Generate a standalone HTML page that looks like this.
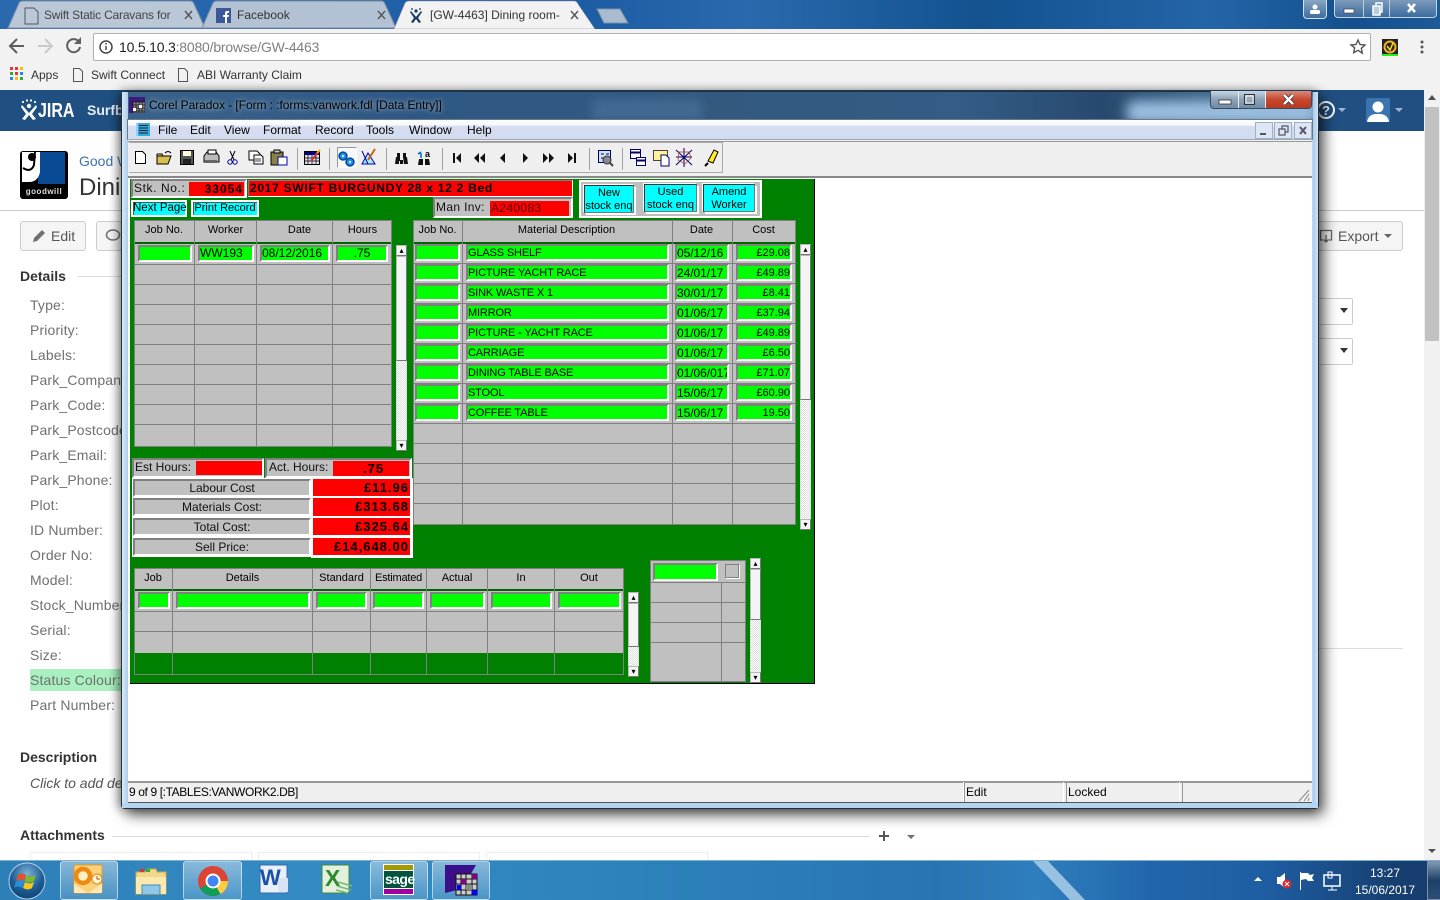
<!DOCTYPE html>
<html><head><meta charset="utf-8"><title>Corel Paradox</title>
<style>
html,body{margin:0;padding:0;width:1440px;height:900px;overflow:hidden;background:#fff;font-family:"Liberation Sans",sans-serif}
div,b,i,span,svg{position:absolute;box-sizing:border-box}
.t{white-space:nowrap;font-weight:normal;font-style:normal;color:#000}
.l{white-space:nowrap;left:30px;font-size:14px;line-height:16px;color:#707070;letter-spacing:.15px}
.h{white-space:nowrap;font-size:14px;font-weight:bold;color:#333;line-height:16px;left:20px}
.m{white-space:nowrap;top:123px;font-size:12px;line-height:14px;color:#000}
.g{white-space:nowrap;font-size:11px;line-height:14px;text-align:center;color:#000;top:223px}
.bh{top:571px}
.f{background:#0f0;border:2px solid;border-color:#808080 #fff #fff #808080;font-size:11px;line-height:13px;color:#000;white-space:nowrap;overflow:hidden;font-weight:normal;font-style:normal;padding-left:0;height:17px}
.c1{left:415px;width:45px}.c2{left:466px;width:203px;padding-top:1px;letter-spacing:-.15px}.c3{left:675px;width:54px;font-size:12px;padding-top:1px;letter-spacing:-.05px}.c4{left:736px;width:56px;text-align:right;padding-top:1px}
.r0{top:244px}.r1{top:264px}.r2{top:284px}.r3{top:304px}.r4{top:324px}.r5{top:344px}.r6{top:364px}.r7{top:384px}.r8{top:404px}
.cy{background:#0ff;border:1px solid;border-color:#333 #777 #777 #333;font-size:11px;line-height:13px;text-align:center;color:#000;white-space:nowrap}
.gr{background:#c0c0c0;border:2px solid;border-color:#808080 #fff #fff #808080;font-size:12px;line-height:14px;text-align:center;color:#111;white-space:nowrap}
.rd{background:#f00;font-weight:bold;font-size:13px;line-height:17px;letter-spacing:1px;text-align:right;color:#000;white-space:nowrap;padding-right:1px;border:1px solid #808080;border-right-color:#fff;border-bottom-color:#fff}
.sb{background:#f1f1f1;border:1px solid #ddd}
.btn{background:#f4f4f4;border:1px solid #b8b8b8;border-right-color:#777;border-bottom-color:#777;text-align:center;font-size:8px;line-height:9px;color:#000}
.tb{border:1px solid rgba(255,255,255,.55);border-radius:3px;background:linear-gradient(180deg,rgba(255,255,255,.42),rgba(255,255,255,.12));top:861px;height:39px}
</style></head><body>

<!-- Chrome -->
<div style="left:0;top:0;width:1440px;height:29px;background:linear-gradient(90deg,#2b69ae,#2464aa 18%,#1c5ca4 40%,#2a69ad 52%,#13528f 68%,#2465a8 84%,#13508d 94%,#1d5a98)"></div>
<svg style="left:0;top:0" width="640" height="30">
<path d="M8 28 L19 3 Q20 1 23 1 L190 1 Q193 1 194 4 L205 28Z" fill="#b9c7d7" stroke="#7e8fa5"/>
<path d="M202 28 L213 3 Q214 1 217 1 L381 1 Q384 1 385 4 L396 28Z" fill="#b2c2d4" stroke="#7e8fa5"/>
<path d="M394 29 L405 3 Q406 1 409 1 L574 1 Q577 1 578 4 L595 29Z" fill="#f2f2f2" stroke="#88a"  stroke-width=".5"/>
<path d="M597 9 L620 9 L628 23 L604 23Z" fill="#a9bccf" stroke="#7e8fa5"/>
<path d="M25 8h9l4 4v12H25z" fill="none" stroke="#555"/>
<rect x="216" y="8" width="15" height="15" fill="#3b5998"/><path d="M225 23v-6h-2v-2h2v-2q0-2 2-2h2v2h-1q-1 0-1 1v1h2l-.4 2H227v6z" fill="#fff"/>
<g fill="#14385f"><circle cx="416" cy="11" r="1.600"/><circle cx="412" cy="9" r=".9"/><circle cx="420" cy="9" r=".9"/><path d="M411 11l5 6 5-6 1 1-4 6 3 4-2 1-3-4-3 4-2-1 3-4-4-6z"/></g>
<g stroke="#555" stroke-width="1.400"><path d="M185 11l7 8M192 11l-7 8M378 11l7 8M385 11l-7 8M571 11l7 8M578 11l-7 8"/></g>
</svg>
<div class="t" style="left:44px;top:8px;font-size:12px;line-height:14px;color:#444;width:128px;overflow:hidden;letter-spacing:-.2px">Swift Static Caravans for Sale</div>
<div class="t" style="left:237px;top:8px;font-size:12px;line-height:14px;color:#333">Facebook</div>
<div class="t" style="left:430px;top:8px;font-size:12px;line-height:14px;color:#333;width:130px;overflow:hidden">[GW-4463] Dining room-</div>

<div style="left:1303px;top:0;width:24px;height:19px;background:linear-gradient(#8ba6c2,#3d6c9e);border:1px solid #d5e1ec;border-top:0;border-radius:0 0 4px 4px"></div>
<svg style="left:1303px;top:0" width="24" height="19"><circle cx="12" cy="7" r="2.500" fill="#fff"/><rect x="7" y="10" width="10" height="4" rx="1.500" fill="#fff"/></svg>
<div style="left:1334px;top:0;width:103px;height:18px;background:linear-gradient(#7d9bbb,#3a6c9f);border:1px solid #c6d5e4;border-top:0;border-radius:0 0 4px 4px"></div>
<div style="left:1363px;top:0;width:1px;height:17px;background:#b9cbdd"></div><div style="left:1389px;top:0;width:1px;height:17px;background:#b9cbdd"></div>
<svg style="left:1334px;top:0" width="103" height="18"><rect x="10" y="9" width="10" height="4" fill="#fff" stroke="#333" stroke-width=".6"/><rect x="39" y="6" width="7" height="9" fill="#bcd" stroke="#fff" stroke-width="1.500"/><path d="M42 5V3h6v9h-2" fill="none" stroke="#fff" stroke-width="1.500"/><path d="M74 4l7 8M81 4l-7 8" stroke="#fff" stroke-width="2.600"/></svg>

<div style="left:0;top:29px;width:1440px;height:61px;background:#f2f2f2"></div>
<div style="left:93px;top:33px;width:1278px;height:28px;background:#fff;border:1px solid #b0b0b0;border-radius:2px"></div>
<svg style="left:0;top:29px" width="116" height="32" fill="none">
<path d="M24 18H11M17 11l-7 7 7 7" stroke="#5e5e5e" stroke-width="2" transform="translate(0,-1)"/>
<path d="M38 17h13M45 10l7 7-7 7" stroke="#c9c9c9" stroke-width="2"/>
<path d="M79 13a6.500 6.500 0 1 0 1 5" stroke="#5e5e5e" stroke-width="2"/><path d="M81 8v7h-7z" fill="#5e5e5e"/>
<circle cx="106" cy="18" r="6" stroke="#444" stroke-width="1.500"/><path d="M106 17v4M106 14v1.500" stroke="#444" stroke-width="1.500"/>
</svg>
<div class="t" style="left:119px;top:39px;font-size:14px;line-height:16px;letter-spacing:-.2px;color:#222">10.5.10.3<span style="position:static;color:#808080">:8080/browse/GW-4463</span></div>
<svg style="left:1345px;top:35px" width="90" height="26" fill="none"><path d="M13 5l2 4.500 5 .5-3.700 3.300 1 4.900L13 15.300l-4.300 2.400 1-4.900L6 10l5-.5z" stroke="#555" stroke-width="1.400"/><rect x="37" y="4" width="16" height="17" fill="#222"/><circle cx="45" cy="12" r="5.500" stroke="#f5b21e" stroke-width="2"/><path d="M42 11l3 4 3-7" stroke="#f5e01e" stroke-width="1.500"/><rect x="37" y="19" width="16" height="2" fill="#2e2"/><g fill="#555"><circle cx="77" cy="7" r="1.500"/><circle cx="77" cy="12" r="1.500"/><circle cx="77" cy="17" r="1.500"/></g></svg>
<svg style="left:10px;top:67px" width="14" height="14"><g><rect x="0" y="0" width="3" height="3" fill="#e33"/><rect x="5" y="0" width="3" height="3" fill="#e33"/><rect x="10" y="0" width="3" height="3" fill="#fb0"/><rect x="0" y="5" width="3" height="3" fill="#3a3"/><rect x="5" y="5" width="3" height="3" fill="#e33"/><rect x="10" y="5" width="3" height="3" fill="#28e"/><rect x="0" y="10" width="3" height="3" fill="#28e"/><rect x="5" y="10" width="3" height="3" fill="#fb0"/><rect x="10" y="10" width="3" height="3" fill="#3a3"/></g></svg>
<div class="t" style="left:31px;top:68px;font-size:12px;line-height:14px;color:#333">Apps</div>
<svg style="left:72px;top:67px" width="120" height="15" fill="none" stroke="#555"><path d="M1.500 1.500h6l3 3v10h-9z"/><path d="M106.500 1.500h6l3 3v10h-9z"/></svg>
<div class="t" style="left:91px;top:68px;font-size:12px;line-height:14px;color:#333">Swift Connect</div>
<div class="t" style="left:197px;top:68px;font-size:12px;line-height:14px;color:#333">ABI Warranty Claim</div>

<!-- JIRA page behind -->
<div style="left:0;top:90px;width:1424px;height:41px;background:#205081"></div>
<svg style="left:21px;top:99px" width="20" height="22" fill="#fff"><circle cx="8" cy="7" r="2.200"/><circle cx="2" cy="3" r="1.100"/><circle cx="6" cy="1.500" r="1.100"/><circle cx="10" cy="1.500" r="1.100"/><circle cx="14" cy="3" r="1.100"/><path d="M1 6l7 8 7-8 1 2-5 7 4 5-3 1-4-5-4 5-3-1 4-5-5-7z"/></svg>
<div class="t" style="left:38px;top:100px;font-size:20px;line-height:22px;font-weight:bold;color:#fff;transform:scaleX(.8);transform-origin:0 0">JIRA</div>
<div class="t" style="left:87px;top:102px;font-size:14px;line-height:16px;font-weight:bold;color:#e8eef5">Surfb</div>
<svg style="left:1318px;top:97px" width="90" height="28"><circle cx="8" cy="13" r="8" fill="none" stroke="#fff" stroke-width="2"/><text x="4" y="18" font-family="Liberation Sans" font-size="13" font-weight="bold" fill="#fff">?</text><path d="M20 11h8l-4 4z M77 11h8l-4 4z" fill="#9db4ce"/><rect x="48" y="1" width="24" height="24" rx="2" fill="#3b73af"/><circle cx="60" cy="10" r="5.500" fill="#fff"/><path d="M49 25q1-7 8-8h6q7 1 8 8z" fill="#fff"/></svg>

<div style="left:20px;top:151px;width:48px;height:48px;background:#000;border-radius:3px"></div>
<div style="left:38px;top:152px;width:27px;height:32px;background:#0a4a95"></div>
<svg style="left:20px;top:151px" width="48" height="36"><path d="M2 1h18v20q-2 10-11 10H2z" fill="#fff"/><circle cx="12" cy="6" r="4" fill="#000"/><path d="M3 17q8 5 11-3l1-13" fill="none" stroke="#000" stroke-width="2"/></svg>
<div class="t" style="left:21px;top:187px;width:46px;font-size:8px;line-height:10px;font-weight:bold;color:#ddd;letter-spacing:.5px;text-align:center">goodwill</div>
<div class="t" style="left:79px;top:153px;font-size:14px;line-height:16px;color:#3b73af">Good W</div>
<div class="t" style="left:79px;top:174px;font-size:24px;line-height:28px;color:#333">Dining</div>
<div style="left:0;top:210px;width:1424px;height:1px;background:#ccc"></div>
<div style="left:20px;top:221px;width:66px;height:30px;background:#f5f5f5;border:1px solid #ccc;border-radius:3px"></div>
<svg style="left:32px;top:228px" width="16" height="16"><path d="M1 14l1-4 8-8 3 3-8 8z" fill="#707070"/></svg>
<div class="t" style="left:51px;top:228px;font-size:14px;line-height:16px;color:#555">Edit</div>
<div style="left:96px;top:221px;width:66px;height:30px;background:#f5f5f5;border:1px solid #ccc;border-radius:3px"></div>
<svg style="left:105px;top:228px" width="16" height="16"><ellipse cx="8" cy="7" rx="6.500" ry="5" fill="none" stroke="#707070" stroke-width="1.500"/></svg>
<div style="left:1310px;top:221px;width:93px;height:30px;background:#f5f5f5;border:1px solid #ccc;border-radius:3px"></div>
<svg style="left:1319px;top:229px" width="15" height="15" fill="none" stroke="#666" stroke-width="1.300"><path d="M4 11H1.500V1.500h11V11H10"/><path d="M7 6v7M4.500 10.500L7 13l2.500-2.500"/></svg>
<div class="t" style="left:1338px;top:228px;font-size:14px;line-height:16px;color:#555">Export</div>
<svg style="left:1384px;top:234px" width="9" height="5"><path d="M0 0h8l-4 4z" fill="#666"/></svg>
<div style="left:1300px;top:298px;width:53px;height:27px;background:#fff;border:1px solid #ccc;border-radius:2px"></div>
<div style="left:1300px;top:338px;width:53px;height:27px;background:#fff;border:1px solid #ccc;border-radius:2px"></div>
<svg style="left:1340px;top:308px" width="9" height="50"><path d="M0 0h8l-4 5zM0 40h8l-4 5z" fill="#333"/></svg>
<div style="left:1300px;top:648px;width:103px;height:1px;background:#ddd"></div>

<div class="h" style="top:268px">Details</div>
<div style="left:78px;top:276px;width:60px;height:1px;background:#ddd"></div>
<div class="l" style="top:297px">Type:</div><div class="l" style="top:322px">Priority:</div><div class="l" style="top:347px">Labels:</div><div class="l" style="top:372px">Park_Company:</div><div class="l" style="top:397px">Park_Code:</div><div class="l" style="top:422px">Park_Postcode:</div><div class="l" style="top:447px">Park_Email:</div><div class="l" style="top:472px">Park_Phone:</div><div class="l" style="top:497px">Plot:</div><div class="l" style="top:522px">ID Number:</div><div class="l" style="top:547px">Order No:</div><div class="l" style="top:572px">Model:</div><div class="l" style="top:597px">Stock_Number:</div><div class="l" style="top:622px">Serial:</div><div class="l" style="top:647px">Size:</div>
<div style="left:30px;top:669px;width:95px;height:22px;background:#a8f0c0"></div>
<div class="l" style="top:672px">Status Colour:</div><div class="l" style="top:697px">Part Number:</div>
<div class="h" style="top:749px">Description</div>
<div class="t" style="left:30px;top:775px;font-size:14px;line-height:16px;font-style:italic;color:#555">Click to add description</div>
<div class="h" style="top:827px">Attachments</div>
<div style="left:112px;top:836px;width:758px;height:1px;background:#ddd"></div>
<svg style="left:878px;top:830px" width="40" height="12"><path d="M6 1v10M1 6h10" stroke="#555" stroke-width="2"/><path d="M29 5h8l-4 4z" fill="#707070"/></svg>
<div style="left:30px;top:852px;width:222px;height:10px;border:1px solid #eee"></div>
<div style="left:258px;top:852px;width:222px;height:10px;border:1px solid #eee"></div>
<div style="left:486px;top:852px;width:222px;height:10px;border:1px solid #eee"></div>

<div style="left:1424px;top:90px;width:16px;height:770px;background:#f1f1f1"></div>
<div style="left:1425px;top:107px;width:14px;height:234px;background:#c1c1c1"></div>
<svg style="left:1424px;top:90px" width="16" height="770"><path d="M4 10l4-5 4 5zM4 759h8l-4 4z" fill="#505050"/></svg>

<!-- Window -->
<div style="left:121px;top:91px;width:1198px;height:718px;border-radius:6px 6px 4px 4px;background:#b9d8f2;border:1px solid #2a2f35;box-shadow:5px 6px 14px rgba(0,0,0,.65),-3px 0 10px rgba(0,0,0,.4)"></div>
<div style="left:122px;top:92px;width:1196px;height:27px;border-radius:5px 5px 0 0;overflow:hidden;background:linear-gradient(90deg,#3a638c,#2e5884 25%,#33597f 50%,#335d85 70%,#28496f 82%,#3d6485 90%,#4a7399)">
<div style="left:1005px;top:9px;width:190px;height:22px;background:#9cc0e2;filter:blur(6px);border-radius:6px"></div>
<div style="left:470px;top:7px;width:110px;height:22px;background:#4a7299;filter:blur(5px);opacity:.7"></div>
</div>
<div style="left:122px;top:92px;width:6px;height:716px;background:linear-gradient(90deg,#dce9f5,#a9cdec)"></div>
<div style="left:1313px;top:92px;width:5px;height:716px;background:linear-gradient(90deg,#a9cdec,#cfe2f4)"></div>
<div style="left:122px;top:803px;width:1196px;height:5px;background:#b5d6f2"></div>
<svg style="left:129px;top:97px" width="16" height="16"><rect width="16" height="16" fill="#3b1a78"/><rect x="4" y="5" width="12" height="11" fill="#888"/><path d="M4 5h12v11H4zM7 5v11M10 5v11M13 5v11M4 8h12M4 11h12M4 14h12" fill="none" stroke="#111" stroke-width=".7"/><rect x="10" y="8" width="3" height="3" fill="#fff"/><rect x="4" y="11" width="3" height="3" fill="#fff"/></svg>
<div class="t" style="left:149px;top:98px;font-size:12px;line-height:14px;color:#000;letter-spacing:-.06px;text-shadow:0 0 5px rgba(255,255,255,.55),0 0 9px rgba(255,255,255,.35)">Corel Paradox - [Form : :forms:vanwork.fdl [Data Entry]]</div>
<div style="left:1210px;top:91px;width:102px;height:18px;border:1px solid #3d4a58;border-top:0;border-radius:0 0 4px 4px;overflow:hidden;background:linear-gradient(#c9d6e2,#8ba2b8 50%,#6f8ba6)">
<div style="left:54px;top:0;width:47px;height:18px;background:linear-gradient(#d98a7a,#c8452e 50%,#b33a22);border-left:1px solid #eee"></div>
<div style="left:27px;top:0;width:1px;height:18px;background:#eee"></div>
</div>
<svg style="left:1210px;top:91px" width="102" height="18"><rect x="9" y="9" width="12" height="4" fill="#fff" stroke="#333" stroke-width=".8"/><rect x="34.500" y="3.500" width="10" height="10" fill="none" stroke="#333" stroke-width="1"/><rect x="36" y="5" width="7" height="7" fill="none" stroke="#fff"/><rect x="37.500" y="7" width="4" height="3" fill="#aaa"/><path d="M74 4l9 9M83 4l-9 9" stroke="#333" stroke-width="4"/><path d="M74 4l9 9M83 4l-9 9" stroke="#fff" stroke-width="2.400"/></svg>

<!-- MDI -->
<div style="left:127px;top:119px;width:1186px;height:21px;background:linear-gradient(#fff,#f7f8fc 25%,#d6ddf0 35%,#d3dbef);border:1px solid #6a7a8a;border-bottom:1px solid #a0a8b0"></div>
<svg style="left:136px;top:123px" width="14" height="13"><rect width="14" height="13" fill="#3ad"/><path d="M3 2.500h9M3 5h9M3 7.500h9M3 10h9" stroke="#222" stroke-width=".9"/><rect x="0" y="0" width="2" height="13" fill="#9cf"/></svg>
<div class="m" style="left:158px">File</div><div class="m" style="left:190px">Edit</div><div class="m" style="left:224px">View</div><div class="m" style="left:263px">Format</div><div class="m" style="left:315px">Record</div><div class="m" style="left:366px">Tools</div><div class="m" style="left:409px">Window</div><div class="m" style="left:467px">Help</div>
<svg style="left:1255px;top:122px" width="57" height="17"><g fill="#dde6f4" stroke="#9fb0c4"><rect x=".5" y=".5" width="17" height="16"/><rect x="19.500" y=".5" width="17" height="16"/><rect x="39.500" y=".5" width="17" height="16"/></g><rect x="5" y="11" width="6" height="2" fill="#556"/><path d="M24 7h6v6h-6zM27 7V4h6v6h-3" fill="none" stroke="#556" stroke-width="1.200"/><path d="M45 5l6 7M51 5l-6 7" stroke="#556" stroke-width="2"/></svg>

<div style="left:128px;top:140px;width:1184px;height:38px;background:#efefef;border-bottom:2px solid #888"></div>
<div style="left:129px;top:142px;width:594px;height:31px;border:1px solid #a8a8a8;border-left:0"></div>
<div style="left:128px;top:141px;width:1184px;height:1px;background:#999"></div>
<div style="left:337px;top:147px;width:20px;height:21px;background:#f8f8f8;border:1px solid;border-color:#999 #fff #fff #999"></div>
<svg style="left:130px;top:145px" width="590" height="26" shape-rendering="geometricPrecision">
<g stroke="#a0a0a0"><path d="M167.500 3v22M199.500 3v22M256.500 3v22M312.500 3v22M459.500 3v22M492.500 3v22"/></g>
<path d="M5.500 6.500h7l3 3v9h-10z" fill="#fff" stroke="#000"/>
<path d="M27 11h14l-3 8H27z" fill="#d8c04a" stroke="#000"/><path d="M27 9v10M27 9h5l1 2" fill="#fc0" stroke="#000"/><path d="M35 8q3-3 6 0" fill="none" stroke="#000"/>
<rect x="50.500" y="5.500" width="13" height="14" fill="#555" stroke="#000"/><rect x="53" y="6" width="8" height="5" fill="#ffd"/><rect x="53" y="14" width="8" height="5" fill="#222"/>
<path d="M74 11l3-4h9l3 4v6H74z" fill="#bbb" stroke="#000"/><rect x="75" y="15" width="12" height="3" fill="#666"/><rect x="78" y="5" width="8" height="4" fill="#fff" stroke="#000"/>
<g fill="none" stroke="#00a"><circle cx="100" cy="17" r="2.200"/><circle cx="105" cy="17" r="2.200"/></g><path d="M101 15L105 6M104 15L100 6" stroke="#000"/>
<path d="M119 6h8l3 3v6h-11z" fill="#fff" stroke="#000"/><path d="M124 10h7l2 2v7h-9z" fill="#fff" stroke="#000"/><path d="M125 14h6M125 16h6" stroke="#000" stroke-width=".8"/>
<rect x="141" y="7" width="12" height="13" fill="#8a8344" stroke="#000"/><rect x="144" y="5" width="6" height="3" fill="#ccc" stroke="#000"/><rect x="148" y="12" width="9" height="8" fill="#fff" stroke="#00a"/>
<rect x="174.500" y="6.500" width="15" height="13" fill="#dde" stroke="#000"/><rect x="175" y="7" width="14" height="3" fill="#008"/><path d="M178 10v9M182 10v9M186 10v9M175 13h14M175 16h14" stroke="#000" stroke-width=".7"/><path d="M181 16l8-10" stroke="#d33" stroke-width="2"/><path d="M187 8l3-3" stroke="#fa0" stroke-width="2"/>
<g fill="#1090e0" stroke="#003a9a" stroke-width="1.300"><circle cx="213" cy="11" r="4"/><circle cx="220" cy="17" r="4"/></g><circle cx="213" cy="11" r="1.300" fill="#cde"/><circle cx="220" cy="17" r="1.300" fill="#cde"/>
<path d="M232 19l6-11 7 11z" fill="#aef" stroke="#00a"/><path d="M238 15l7-11" stroke="#c60" stroke-width="2"/><path d="M232 6l6 13" stroke="#00a"/>
<g fill="#111"><path d="M266 12h4v3h3v-3h0v7h-3v-3h-1v3h-4zM273 12h4l1 7h-4z"/><path d="M267 8h3v4h-3zM273 8h3v4h-3z"/></g>
<g fill="#111"><path d="M289 14h4v6h-5zM295 14h4l1 6h-5z"/></g><path d="M291 8v5M288 9l3-2" stroke="#06c" stroke-width="1.500" fill="none"/><text x="295" y="12" font-family="Liberation Sans" font-size="9" font-weight="bold" fill="#000">a</text>
<g fill="#111">
<rect x="323" y="8" width="2" height="10"/><path d="M331 8v10l-5-5z"/>
<path d="M349 8v10l-5-5zM355 8v10l-5-5z"/>
<path d="M375 8v10l-5-5z"/>
<path d="M393 8v10l5-5z"/>
<path d="M413 8v10l5-5zM419 8v10l5-5z"/>
<path d="M438 8v10l5-5z"/><rect x="444" y="8" width="2" height="10"/></g>
<rect x="468.500" y="5.500" width="12" height="12" fill="#cfe4f4" stroke="#006"/><path d="M471 9h3M476 9h3M471 13h3" stroke="#006"/><circle cx="477" cy="15" r="4" fill="#889" stroke="#333"/><path d="M480 18l3 3" stroke="#444" stroke-width="2"/>
<g fill="#fff" stroke="#006"><rect x="500.500" y="4.500" width="10" height="9"/><rect x="506.500" y="12.500" width="9" height="8"/></g><path d="M500.500 7.500h10M506.500 15.500h9" stroke="#006" stroke-width="2"/>
<rect x="523.500" y="5.500" width="14" height="10" fill="#fff29a" stroke="#444"/><path d="M531 10h5l3 3v8h-8z" fill="#fff" stroke="#006"/>
<path d="M546 5l16 15M562 5l-16 15M554 3v19M546 12h16" stroke="#006" fill="none"/><path d="M549 7l10 0 2 6-6 6-7-4z" fill="none" stroke="#a33" stroke-width=".7"/>
<path d="M578 16l6-11 4 2-5 11z" fill="#fe2" stroke="#000"/><path d="M575 21l3-3" stroke="#000" stroke-width="2"/>
</svg>

<div style="left:128px;top:178px;width:1184px;height:603px;background:#fff"></div>

<!-- Form -->
<svg style="left:0;top:0" width="1440" height="900" shape-rendering="crispEdges">
<rect x="130" y="179" width="685" height="505" fill="#008000"/>
<path d="M814.500 179v504.500H130" fill="none" stroke="#000"/>
<!-- grid1 -->
<rect x="134" y="220" width="258" height="227" fill="#c0c0c0"/>
<rect x="134" y="242" width="258" height="2" fill="#006400"/>
<g fill="none" stroke="#808080"><rect x="134.500" y="220.500" width="257" height="226"/><path d="M194.500 220v226M256.500 220v226M332.500 220v226M134 264.500h258M134 284.500h258M134 304.500h258M134 324.500h258M134 344.500h258M134 364.500h258M134 384.500h258M134 404.500h258M134 424.500h258"/></g>
<!-- grid2 -->
<rect x="413" y="220" width="383" height="305" fill="#c0c0c0"/>
<rect x="413" y="242" width="383" height="2" fill="#006400"/>
<g fill="none" stroke="#808080"><rect x="413.500" y="220.500" width="382" height="304"/><path d="M462.500 220v304M672.500 220v304M732.500 220v304M413 263.500h383M413 283.500h383M413 303.500h383M413 323.500h383M413 343.500h383M413 363.500h383M413 383.500h383M413 403.500h383M413 423.500h383M413 443.500h383M413 463.500h383M413 483.500h383M413 503.500h383"/></g>
<!-- bottom -->
<rect x="134" y="568" width="490" height="85" fill="#c0c0c0"/>
<rect x="134" y="589" width="490" height="2" fill="#006400"/>
<g fill="none" stroke="#808080"><rect x="134.500" y="568.500" width="489" height="106"/><path d="M172.500 568v106M312.500 568v106M370.500 568v106M426.500 568v106M487.500 568v106M554.500 568v106M134 611.500h490M134 631.500h490"/></g>
<rect x="650" y="560" width="96" height="122" fill="#c0c0c0"/>
<g fill="none" stroke="#808080"><rect x="650.500" y="560.500" width="95" height="121"/><path d="M721.500 582v100M650 582.500h96M650 602.500h96M650 622.500h96M650 642.500h96"/></g>
<!-- white backing -->
<rect x="132" y="478" width="281" height="2" fill="#fff"/>
<rect x="311" y="479" width="102" height="79" fill="#fff"/>
<rect x="132" y="479" width="180" height="78" fill="#fff"/>
<rect x="579" y="180" width="183" height="38" fill="#fff"/>
<path d="M581.500 182.500h178v33h-178z" fill="#c0c0c0" stroke="#999" stroke-dasharray="1 1"/>
</svg>

<!-- top fields -->
<div class="gr" style="left:131px;top:179px;width:116px;height:19px;text-align:left;padding-left:1px;font-size:12px;line-height:15px;letter-spacing:.6px;border-color:#808080 #fff #fff #808080">Stk. No.:</div>
<div class="rd" style="left:189px;top:182px;width:55px;height:14px;font-size:12px;line-height:15px;border:0;padding-right:1px">33054</div>
<div style="left:248px;top:180px;width:325px;height:17px;background:#f00;border:1px solid #808080;border-color:#808080 #fff #fff #808080;font-weight:bold;font-size:12px;line-height:15px;letter-spacing:.72px;padding-left:1px;white-space:nowrap;color:#000">2017 SWIFT BURGUNDY 28 x 12 2 Bed</div>
<div class="cy" style="left:131px;top:200px;width:56px;height:17px;border:2px solid #fff;line-height:13px;box-shadow:inset 1px 1px #555;font-size:11.500px">Next Page</div>
<div class="cy" style="left:191px;top:200px;width:68px;height:17px;border:2px solid #fff;line-height:13px;box-shadow:inset 1px 1px #555">Print Record</div>
<div class="gr" style="left:433px;top:197px;width:140px;height:21px;text-align:left;padding-left:1px;line-height:17px;letter-spacing:.35px">Man Inv:</div>
<div style="left:490px;top:201px;width:79px;height:15px;background:#f00;font-size:12px;line-height:15px;letter-spacing:.35px;color:#500;padding-left:1px;white-space:nowrap">A240083</div>
<div class="cy" style="left:584px;top:185px;width:50px;height:28px;padding-top:1px;box-shadow:2px 2px #fff,-1px -1px #fff">New<br>stock enq</div>
<div class="cy" style="left:644px;top:184px;width:53px;height:28px;padding-top:1px;box-shadow:2px 2px #fff,-1px -1px #fff">Used<br>stock enq</div>
<div class="cy" style="left:703px;top:184px;width:52px;height:28px;padding-top:1px;box-shadow:2px 2px #fff,-1px -1px #fff">Amend<br>Worker</div>

<!-- grid headers -->
<div class="g" style="left:134px;width:60px">Job No.</div><div class="g" style="left:195px;width:61px">Worker</div><div class="g" style="left:262px;width:75px">Date</div><div class="g" style="left:333px;width:59px">Hours</div>
<div class="g" style="left:413px;width:49px">Job No.</div><div class="g" style="left:463px;width:207px">Material Description</div><div class="g" style="left:672px;width:59px">Date</div><div class="g" style="left:732px;width:63px">Cost</div>
<b class="f" style="left:138px;top:245px;width:54px"></b>
<b class="f" style="left:198px;top:245px;width:56px;font-size:12px">WW193</b>
<b class="f" style="left:260px;top:245px;width:70px;font-size:12px">08/12/2016</b>
<b class="f" style="left:336px;top:245px;width:52px;text-align:center;font-size:12px">.75</b>

<b class="f c1 r0"></b><b class="f c2 r0">GLASS SHELF</b><b class="f c3 r0">05/12/16</b><b class="f c4 r0">£29.08</b>
<b class="f c1 r1"></b><b class="f c2 r1">PICTURE YACHT RACE</b><b class="f c3 r1">24/01/17</b><b class="f c4 r1">£49.89</b>
<b class="f c1 r2"></b><b class="f c2 r2">SINK WASTE X 1</b><b class="f c3 r2">30/01/17</b><b class="f c4 r2">£8.41</b>
<b class="f c1 r3"></b><b class="f c2 r3">MIRROR</b><b class="f c3 r3">01/06/17</b><b class="f c4 r3">£37.94</b>
<b class="f c1 r4"></b><b class="f c2 r4">PICTURE - YACHT RACE</b><b class="f c3 r4">01/06/17</b><b class="f c4 r4">£49.89</b>
<b class="f c1 r5"></b><b class="f c2 r5">CARRIAGE</b><b class="f c3 r5">01/06/17</b><b class="f c4 r5">£6.50</b>
<b class="f c1 r6"></b><b class="f c2 r6">DINING TABLE BASE</b><b class="f c3 r6">01/06/017</b><b class="f c4 r6">£71.07</b>
<b class="f c1 r7"></b><b class="f c2 r7">STOOL</b><b class="f c3 r7">15/06/17</b><b class="f c4 r7">£60.90</b>
<b class="f c1 r8"></b><b class="f c2 r8">COFFEE TABLE</b><b class="f c3 r8">15/06/17</b><b class="f c4 r8">19.50</b>

<!-- scrollbars -->
<div class="sb" style="left:396px;top:245px;width:11px;height:206px;background:repeating-conic-gradient(#fff 0 25%,#ddd 0 50%) 0 0/2px 2px"></div><div class="btn" style="left:396px;top:245px;width:11px;height:11px">▴</div><div class="btn" style="left:396px;top:256px;width:11px;height:105px"></div><div class="btn" style="left:396px;top:440px;width:11px;height:11px">▾</div>
<div class="sb" style="left:800px;top:244px;width:11px;height:286px;background:repeating-conic-gradient(#fff 0 25%,#ddd 0 50%) 0 0/2px 2px"></div><div class="btn" style="left:800px;top:244px;width:11px;height:11px">▴</div><div class="btn" style="left:800px;top:255px;width:11px;height:145px"></div><div class="btn" style="left:800px;top:519px;width:11px;height:11px">▾</div>
<div class="sb" style="left:628px;top:592px;width:11px;height:85px;background:repeating-conic-gradient(#fff 0 25%,#ddd 0 50%) 0 0/2px 2px"></div><div class="btn" style="left:628px;top:592px;width:11px;height:11px">▴</div><div class="btn" style="left:628px;top:603px;width:11px;height:44px"></div><div class="btn" style="left:628px;top:666px;width:11px;height:11px">▾</div>
<div class="sb" style="left:750px;top:558px;width:11px;height:125px;background:repeating-conic-gradient(#fff 0 25%,#ddd 0 50%) 0 0/2px 2px"></div><div class="btn" style="left:750px;top:558px;width:11px;height:11px">▴</div><div class="btn" style="left:750px;top:569px;width:11px;height:51px"></div><div class="btn" style="left:750px;top:672px;width:11px;height:11px">▾</div>

<!-- hours -->
<div class="gr" style="left:132px;top:458px;width:132px;height:20px;text-align:left;padding-left:1px;line-height:15px">Est Hours:</div>
<div style="left:196px;top:461px;width:66px;height:14px;background:#f00"></div>
<div class="gr" style="left:265px;top:458px;width:147px;height:20px;text-align:left;padding-left:2px;line-height:15px">Act. Hours:</div>
<div class="rd" style="left:333px;top:461px;width:76px;height:15px;text-align:left;padding-left:30px;line-height:16px;border:0">.75</div>
<div class="gr" style="left:133px;top:479px;width:178px;height:18px">Labour Cost</div>
<div class="gr" style="left:133px;top:498px;width:178px;height:18px">Materials Cost:</div>
<div class="gr" style="left:133px;top:518px;width:178px;height:18px">Total Cost:</div>
<div class="gr" style="left:133px;top:538px;width:178px;height:18px">Sell Price:</div>
<div class="rd" style="left:313px;top:479px;width:97px;height:17px;line-height:17px;border:0">£11.96</div>
<div class="rd" style="left:313px;top:498px;width:97px;height:18px;line-height:17px;border:0">£313.68</div>
<div class="rd" style="left:313px;top:518px;width:97px;height:17px;line-height:17px;border:0">£325.64</div>
<div class="rd" style="left:313px;top:538px;width:97px;height:17px;line-height:17px;border:0">£14,648.00</div>

<!-- bottom grid -->
<div class="g bh" style="left:134px;width:38px">Job</div><div class="g bh" style="left:173px;width:139px">Details</div><div class="g bh" style="left:313px;width:57px">Standard</div><div class="g bh" style="left:371px;width:55px;letter-spacing:-.2px">Estimated</div><div class="g bh" style="left:427px;width:60px">Actual</div><div class="g bh" style="left:488px;width:66px">In</div><div class="g bh" style="left:555px;width:68px">Out</div>
<b class="f" style="left:138px;top:592px;width:32px"></b><b class="f" style="left:176px;top:592px;width:134px"></b><b class="f" style="left:316px;top:592px;width:51px"></b><b class="f" style="left:373px;top:592px;width:51px"></b><b class="f" style="left:430px;top:592px;width:55px"></b><b class="f" style="left:491px;top:592px;width:61px"></b><b class="f" style="left:558px;top:592px;width:63px"></b>
<b class="f" style="left:653px;top:563px;width:65px;height:18px"></b>
<div style="left:725px;top:564px;width:14px;height:14px;background:#c0c0c0;border:1px solid #808080;box-shadow:1px 1px #fff"></div>

<!-- status -->
<div style="left:128px;top:781px;width:1184px;height:22px;background:#efefef;border-top:2px solid #999;border-bottom:1px solid #555"></div>
<div class="t" style="left:129px;top:785px;font-size:12px;line-height:14px;letter-spacing:-.38px">9 of 9 [:TABLES:VANWORK2.DB]</div>
<div class="t" style="left:966px;top:785px;font-size:12px;line-height:14px">Edit</div>
<div class="t" style="left:1068px;top:785px;font-size:12px;line-height:14px">Locked</div>
<svg style="left:960px;top:782px" width="352" height="21" shape-rendering="crispEdges"><path d="M4.500 0v20M106.500 0v20M222.500 0v20" stroke="#999"/><path d="M3.500 0v20M103.500 0v20M219.500 0v20" stroke="#fff"/><path d="M349 8L339 19M349 12L344 19M349 16L348 19" stroke="#888" shape-rendering="geometricPrecision"/></svg>

<!-- Taskbar -->
<div style="left:0;top:860px;width:1440px;height:40px;background:linear-gradient(90deg,#2d7fb8,#348bc3 20%,#2f84bd 40%,#2a7cb8 55%,#2a73b3 65%,#2f7ebd 72%,#2166ad 80%,#1e5da2 88%,#163f6f 97%);border-top:1px solid #7fb0d0"></div>
<svg style="left:1020px;top:861px" width="80" height="39"><path d="M13 0h15l37 39H50z" fill="#bcd9ee" opacity=".75"/></svg>
<div class="tb" style="left:60px;width:58px"></div>
<div class="tb" style="left:183px;width:59px"></div>
<div class="tb" style="left:370px;width:58px"></div>
<div class="tb" style="left:432px;width:58px"></div>
<svg style="left:0;top:860px" width="500" height="40">
<defs><radialGradient id="o" cx=".5" cy=".3" r=".8"><stop offset="0" stop-color="#7db3d8"/><stop offset=".55" stop-color="#1c5d95"/><stop offset="1" stop-color="#0e3b66"/></radialGradient></defs>
<circle cx="27" cy="21" r="18" fill="url(#o)" stroke="#b8d0e4" stroke-width="1"/>
<path d="M18 15q4-3 8 0l-2 6q-4-3-8 0z" fill="#e8512a"/><path d="M27 15q4 3 9 0l-2 6q-4 3-9 0z" fill="#7fba28"/><path d="M16 22q4-3 8 0l-2 6q-4-3-8 0z" fill="#2b8fd8"/><path d="M25 22q4 3 9 0l-2 6q-4 3-9 0z" fill="#f8c81e"/>
<rect x="74" y="5" width="28" height="28" rx="2" fill="#fbd27a" stroke="#e89a20"/><circle cx="83" cy="16" r="7" fill="#fff0c8" stroke="#ef8a10" stroke-width="4.500"/><circle cx="97" cy="19" r="5" fill="#fff4d8" stroke="#d98a10"/><path d="M97 16v3h3" stroke="#b50" fill="none"/><path d="M74 24l14 9H74zM102 24L88 33h14z" fill="#fde9b8"/>
<path d="M136 12h9l2-3h9l1 3h9v22h-30z" fill="#f2d98a" stroke="#c8a84a"/><rect x="136" y="17" width="30" height="17" fill="#fbe9b0"/><path d="M142 34v-9h18v9" fill="#8fc8e8" stroke="#4a8ab8"/><rect x="140" y="9" width="4" height="3" fill="#d33"/><rect x="146" y="9" width="4" height="3" fill="#3a3"/>
<circle cx="213" cy="21" r="15" fill="#db4437"/><path d="M213 21L200 28.500A15 15 0 0 0 220.500 34z" fill="#0f9d58"/><path d="M213 21h15a15 15 0 0 1-7.500 13z" fill="#ffcd40"/><circle cx="213" cy="21" r="6.500" fill="#4285f4" stroke="#fff" stroke-width="2"/>
<rect x="260" y="5" width="27" height="28" fill="#e8f0fa" stroke="#3a67b0"/><rect x="278" y="18" width="10" height="14" fill="#d8e4f4"/><text x="260" y="25" font-family="Liberation Sans" font-size="22" font-weight="bold" fill="#1e50a2">W</text>
<rect x="322" y="5" width="27" height="28" fill="#e2f1dc" stroke="#3e8a3e"/><text x="325" y="26" font-family="Liberation Sans" font-size="23" font-weight="bold" fill="#2f8a2f">X</text><path d="M338 22l14 4M337 26l14 4M336 30l12 3" stroke="#7ab87a" stroke-width="1.500"/>
<rect x="383" y="4" width="31" height="31" fill="#fff"/><rect x="384" y="5" width="29" height="5" fill="#a39a00"/><rect x="384" y="11" width="29" height="17" fill="#03543f"/><rect x="384" y="29" width="29" height="5" fill="#a000a0"/>
<path d="M445 5h31l-7 12-7 12-17 4z" fill="#3b0f8a"/><rect x="456" y="14" width="21" height="21" fill="#ccc" stroke="#111"/><path d="M461 14v21M466 14v21M472 14v21M456 19h21M456 24h21M456 30h21" stroke="#111"/><rect x="461" y="19" width="5" height="5" fill="#808"/><rect x="457" y="25" width="4" height="5" fill="#00f"/><rect x="472" y="30" width="5" height="5" fill="#00f"/><rect x="466" y="25" width="6" height="5" fill="#888"/><rect x="472" y="14" width="5" height="5" fill="#808"/>
</svg>
<div class="t" style="left:385px;top:871px;width:28px;text-align:center;font-size:14px;line-height:16px;font-weight:bold;color:#fff;letter-spacing:-.6px">sage</div>
<svg style="left:1250px;top:870px" width="95" height="22"><path d="M4 11l4-4 4 4z" fill="#fff"/><path d="M27 7h3l5-4v15l-5-4h-3z" fill="#fff"/><circle cx="37" cy="14" r="4.500" fill="#d9272e"/><path d="M35 12l4 4M39 12l-4 4" stroke="#fff"/><path d="M50.500 2v18" stroke="#fff"/><path d="M51 3h7l2 2 4-1-2 4 2 3h-6l-2-2-5 1z" fill="#fff"/><rect x="74" y="5" width="16" height="11" fill="none" stroke="#fff" stroke-width="1.500"/><path d="M78 2h4v6h-4zM78 20h9M82 16v4" stroke="#fff" fill="none"/></svg>
<div class="t" style="left:1350px;top:866px;width:70px;text-align:center;font-size:12px;line-height:14px;color:#fff">13:27</div>
<div class="t" style="left:1350px;top:883px;width:70px;text-align:center;font-size:12px;line-height:14px;color:#fff">15/06/2017</div>
<div style="left:1427px;top:861px;width:13px;height:39px;background:linear-gradient(#7e99b3,#1d3f66 50%,#2a4f75);border:1px solid #88a;border-right:0"></div>
</body></html>
